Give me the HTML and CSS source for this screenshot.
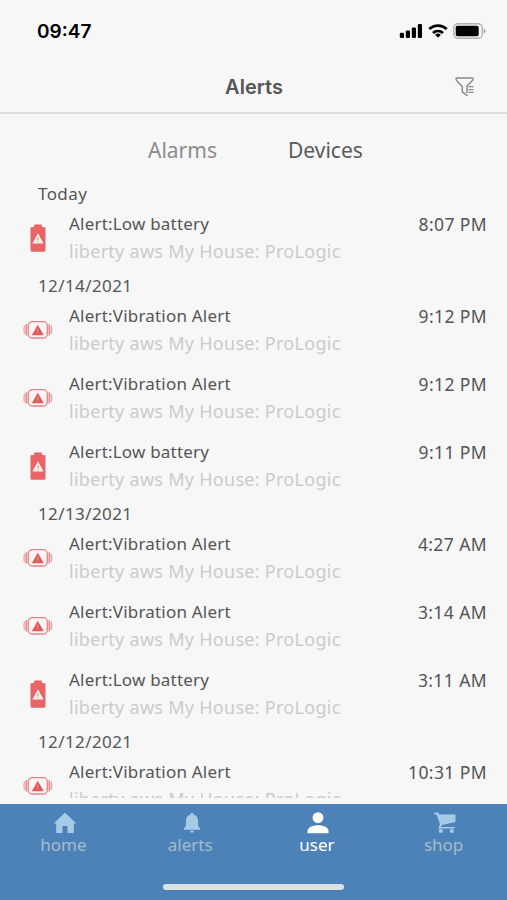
FILE: index.html
```
<!DOCTYPE html>
<html lang="en">

<head>
<meta charset="utf-8">
<meta name="viewport" content="width=device-width, initial-scale=1">
<title>Alerts</title>
<link rel="stylesheet" href="styles.css">
</head>

<body>

<!-- shared icons -->
<svg class="defs" width="0" height="0">
<symbol id="battery" viewBox="0 0 16 28">
	<path fill="#e86467" d="M5 0.5h6a1 1 0 0 1 1 1V3h2.2A1.3 1.3 0 0 1 15.500 4.300V26.500A1.300 1.300 0 0 1 14.200 27.800H1.800A1.300 1.300 0 0 1 .5 26.500V4.300A1.300 1.300 0 0 1 1.800 3H4V1.500a1 1 0 0 1 1-1z"/>
	<path fill="#fdf1ea" d="M8 9.200l5.600 10.300H2.400z"/>
	<path fill="#e59a8f" d="M7.400 13h1.200v3.300H7.400zM7.400 17h1.200v1.200H7.400z"/>
</symbol>
<symbol id="vibration" viewBox="0 0 30 20">
	<rect x="5.300" y="1.700" width="19" height="16.300" rx="4" fill="#fcf5f4" stroke="#e58485" stroke-width="1.300"/>
	<path fill="none" stroke="#e9888a" stroke-width="1.600" d="M3.300 4.300v11.200M26.300 4.300v11.200"/>
	<path fill="none" stroke="#eda3a4" stroke-width="1.400" d="M1.500 6q-.9 4 0 8M28.100 6q.9 4 0 8"/>
	<path fill="#e3595a" d="M14.800 4.700l6 10.500H8.800z"/>
	<path fill="#f0a79c" d="M14.300 8.800h1v3h-1zM14.300 12.600h1v1h-1z"/>
</symbol>
</svg>

<div class="statusbar">
<span class="clock">09:47</span>
<div class="status-icons">
	<svg width="24" height="16" viewBox="0 0 24 16">
		<rect x="0.800" y="9.800" width="4.200" height="5.200" rx="1.200"/>
		<rect x="6.800" y="7.400" width="4.200" height="7.600" rx="1.200"/>
		<rect x="12.800" y="4.400" width="4.200" height="10.600" rx="1.200"/>
		<rect x="18.800" y="1" width="4.200" height="14" rx="1.200"/>
	</svg>
	<svg width="20" height="16" viewBox="0 0 20 16">
		<path fill="none" stroke="#000" stroke-width="2.700" d="M1.300 6.100a12.600 12.600 0 0 1 17.400 0M5 10a7.300 7.300 0 0 1 10 0"/>
		<path d="M10 14.800l-2.900-3a4.200 4.200 0 0 1 5.800 0z"/>
	</svg>
	<svg width="33" height="16" viewBox="0 0 33 16">
		<rect x="0.800" y="0.800" width="28.500" height="14.400" rx="4" fill="none" stroke="#b0b0b0" stroke-width="1.400"/>
		<rect x="2.700" y="2.700" width="23" height="10.600" rx="1.800"/>
		<path fill="#a5a5a5" d="M30.800 5.500q2 1 2 2.500t-2 2.500z"/>
	</svg>
</div>
</div>

<div class="header">
<h1>Alerts</h1>
<svg class="filter" width="20" height="20" viewBox="0 0 20 20" fill="none" stroke="#8a8a8a" stroke-width="1.500">
	<path d="M12 17.500v.9l-4.700-3.600V9.600L1.500 3.400Q.2 1 2.500 1h14.200q2.200 0 1 2.200L12 9.100v7" stroke-linejoin="round"/>
	<path d="M13.500 9.700h5M13.500 12.600h5M13.500 15.400h5" stroke-width="1.300"/>
</svg>
</div>

<div class="tabs">
<span class="tab">Alarms</span>
<span class="tab active">Devices</span>
</div>

<div class="list">

<h2>Today</h2>
<div class="row">
	<svg class="icon battery"><use href="#battery"/></svg>
	<div class="text"><p>Alert:Low battery</p><p class="sub">liberty aws My House: ProLogic</p></div>
	<span class="time">8:07 PM</span>
</div>

<h2>12/14/2021</h2>
<div class="row">
	<svg class="icon vibration"><use href="#vibration"/></svg>
	<div class="text"><p>Alert:Vibration Alert</p><p class="sub">liberty aws My House: ProLogic</p></div>
	<span class="time">9:12 PM</span>
</div>
<div class="row">
	<svg class="icon vibration"><use href="#vibration"/></svg>
	<div class="text"><p>Alert:Vibration Alert</p><p class="sub">liberty aws My House: ProLogic</p></div>
	<span class="time">9:12 PM</span>
</div>
<div class="row">
	<svg class="icon battery"><use href="#battery"/></svg>
	<div class="text"><p>Alert:Low battery</p><p class="sub">liberty aws My House: ProLogic</p></div>
	<span class="time">9:11 PM</span>
</div>

<h2>12/13/2021</h2>
<div class="row">
	<svg class="icon vibration"><use href="#vibration"/></svg>
	<div class="text"><p>Alert:Vibration Alert</p><p class="sub">liberty aws My House: ProLogic</p></div>
	<span class="time">4:27 AM</span>
</div>
<div class="row">
	<svg class="icon vibration"><use href="#vibration"/></svg>
	<div class="text"><p>Alert:Vibration Alert</p><p class="sub">liberty aws My House: ProLogic</p></div>
	<span class="time">3:14 AM</span>
</div>
<div class="row">
	<svg class="icon battery"><use href="#battery"/></svg>
	<div class="text"><p>Alert:Low battery</p><p class="sub">liberty aws My House: ProLogic</p></div>
	<span class="time">3:11 AM</span>
</div>

<h2>12/12/2021</h2>
<div class="row">
	<svg class="icon vibration"><use href="#vibration"/></svg>
	<div class="text"><p>Alert:Vibration Alert</p><p class="sub">liberty aws My House: ProLogic</p></div>
	<span class="time">10:31 PM</span>
</div>

</div>

<div class="bottom">
<div class="nav">
	<a class="nav-item">
		<svg width="24" height="22" viewBox="0 0 24 22"><path d="M12 .8L23.500 11.500H20.800V21H14.500V14H9.500V21H3.200V11.500H.5z"/></svg>
		<span>home</span>
	</a>
	<a class="nav-item">
		<svg width="24" height="22" viewBox="0 0 24 22"><path d="M12 .8q1.300 0 1.500 1.700C17 3.500 18 6 18 9v5l2.300 2.500v1.300H3.700v-1.300L6 14V9c0-3 1-5.500 4.500-6.500Q10.700.8 12 .8zM9.800 18.800h4.400q-.4 2-2.200 2t-2.200-2z"/></svg>
		<span>alerts</span>
	</a>
	<a class="nav-item active">
		<svg width="24" height="22" viewBox="0 0 24 22"><circle cx="12" cy="5.600" r="5.400"/><path d="M1.500 21.200v-2.200C1.500 15.500 6 13.200 12 13.200s10.500 2.300 10.500 5.800v2.200z"/></svg>
		<span>user</span>
	</a>
	<a class="nav-item">
		<svg width="24" height="22" viewBox="0 0 24 22"><path d="M1.300 .5h3.900l1 2H22.500v7.500L8.900 13l-.9 2h13.500v1.500H5.200l1.800-4.200L3.600 2.500H1.300z"/><circle cx="7.800" cy="19" r="2.100"/><circle cx="18.800" cy="19" r="2.100"/></svg>
		<span>shop</span>
	</a>
</div>
<div class="home-bar"></div>
</div>

</body>
</html>
```
FILE: styles.css
```
* {
	box-sizing: border-box;
}

body {
	margin: 0;
	height: 900px;
	display: flex;
	flex-direction: column;
	overflow: hidden;
	background-color: #f7f7f7;
	color: #555;
	font-family: "Noto Sans", sans-serif;
}

h1, h2, p {
	margin: 0;
	font-weight: normal;
}

.defs {
	position: absolute;
}

.statusbar {
	display: flex;
	justify-content: space-between;
	align-items: center;
	height: 62px;
	padding: 0 21px 0 37px;
	color: #000;
}

.clock {
	font-family: Inter, sans-serif;
	font-size: 19px;
	font-weight: 600;
}

.status-icons {
	display: flex;
	gap: 5px;
}

.header {
	display: grid;
	grid-template-columns: 1fr auto 1fr;
	align-items: center;
	height: 52px;
	padding: 0 32px 0 33px;
	border-bottom: 2px solid #dedede;
}

.header h1 {
	grid-column: 2;
	font-family: Inter, sans-serif;
	font-size: 20px;
	font-weight: 600;
}

.filter {
	justify-self: end;
}

.tabs {
	display: flex;
	gap: 71px;
	height: 68px;
	padding: 21px 0 0 148px;
	font-size: 21px;
	line-height: 30px;
}

.tab {
	color: #8c8c8c;
}

.tab.active {
	color: #5a5a5a;
}

.list {
	height: 616px;
	overflow: hidden;
}

.list h2 {
	height: 24px;
	padding-left: 38px;
	font-size: 17px;
	line-height: 23px;
	letter-spacing: 0.4px;
}

.row {
	display: flex;
	height: 68px;
	padding: 4px 20px 0 23px;
	font-size: 17px;
	line-height: 28px;
	letter-spacing: 0.2px;
	white-space: nowrap;
}

.icon {
	width: 30px;
	height: 20px;
	margin-top: 18px;
}

.icon.battery {
	height: 28px;
	margin-top: 14px;
}

.text {
	flex: 1;
	margin-left: 16px;
}

.sub {
	color: #cbcbcb;
	font-size: 18px;
	line-height: 26px;
	letter-spacing: 0.28px;
}

.time {
	font-size: 17.5px;
	letter-spacing: 0.4px;
}

.bottom {
	display: flex;
	flex-direction: column;
	align-items: center;
	height: 96px;
	margin-top: auto;
	background-color: #4d82b8;
}

.nav {
	display: flex;
	width: 100%;
	height: 80px;
	padding-top: 8px;
}

.nav-item {
	flex: 1;
	display: flex;
	flex-direction: column;
	align-items: center;
	color: #a3bccd;
	font-size: 17px;
	line-height: 22px;
}

.nav-item svg {
	margin-left: 3px;
	fill: #a5cbe6;
}

.nav-item.active {
	color: #fff;
}

.nav-item.active svg {
	fill: #fff;
}

.home-bar {
	width: 181px;
	height: 6px;
	border-radius: 3px;
	background-color: #dce1e2;
}
```
